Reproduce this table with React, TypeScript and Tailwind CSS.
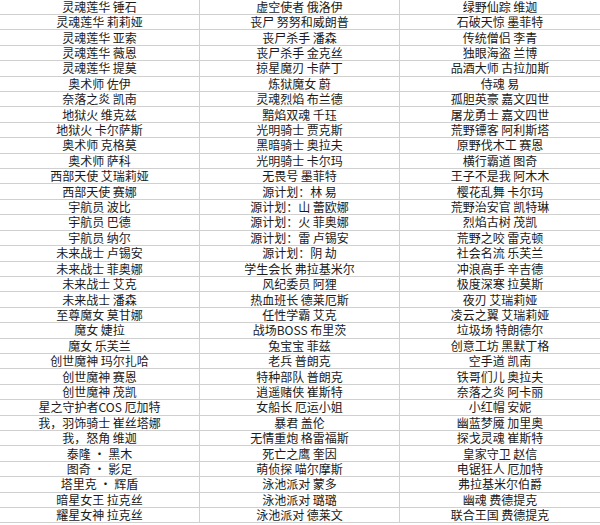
const rows: [string, string, string][] = [
  ["灵魂莲华 锤石", "虚空使者 俄洛伊", "绿野仙踪 维迦"],
  ["灵魂莲华 莉莉娅", "丧尸 努努和威朗普", "石破天惊 墨菲特"],
  ["灵魂莲华 亚索", "丧尸杀手 潘森", "传统僧侣 李青"],
  ["灵魂莲华 薇恩", "丧尸杀手 金克丝", "独眼海盗 兰博"],
  ["灵魂莲华 提莫", "掠星魔刃 卡萨丁", "品酒大师 古拉加斯"],
  ["奥术师 佐伊", "炼狱魔女 蔚", "侍魂 易"],
  ["奈落之炎 凯南", "灵魂烈焰 布兰德", "孤胆英豪 嘉文四世"],
  ["地狱火 维克兹", "黯焰双魂 千珏", "屠龙勇士 嘉文四世"],
  ["地狱火 卡尔萨斯", "光明骑士 贾克斯", "荒野镖客 阿利斯塔"],
  ["奥术师 克格莫", "黑暗骑士 奥拉夫", "原野伐木工 赛恩"],
  ["奥术师 萨科", "光明骑士 卡尔玛", "横行霸道 图奇"],
  ["西部天使 艾瑞莉娅", "无畏号 墨菲特", "王子不是我 阿木木"],
  ["西部天使 赛娜", "源计划：林 易", "樱花乱舞 卡尔玛"],
  ["宇航员 波比", "源计划：山 蕾欧娜", "荒野治安官 凯特琳"],
  ["宇航员 巴德", "源计划：火 菲奥娜", "烈焰古树 茂凯"],
  ["宇航员 纳尔", "源计划：雷 卢锡安", "荒野之咬 雷克顿"],
  ["未来战士 卢锡安", "源计划：阴 劫", "社会名流 乐芙兰"],
  ["未来战士 菲奥娜", "学生会长 弗拉基米尔", "冲浪高手 辛吉德"],
  ["未来战士 艾克", "风纪委员 阿狸", "极度深寒 拉莫斯"],
  ["未来战士 潘森", "热血班长 德莱厄斯", "夜刃 艾瑞莉娅"],
  ["至尊魔女 莫甘娜", "任性学霸 艾克", "凌云之翼 艾瑞莉娅"],
  ["魔女 婕拉", "战场BOSS 布里茨", "垃圾场 特朗德尔"],
  ["魔女 乐芙兰", "兔宝宝 菲兹", "创意工坊 黑默丁格"],
  ["创世魔神 玛尔扎哈", "老兵 普朗克", "空手道 凯南"],
  ["创世魔神 赛恩", "特种部队 普朗克", "铁哥们儿 奥拉夫"],
  ["创世魔神 茂凯", "逍遥赌侠 崔斯特", "奈落之炎 阿卡丽"],
  ["星之守护者COS 厄加特", "女船长 厄运小姐", "小红帽 安妮"],
  ["我，羽饰骑士 崔丝塔娜", "暴君 盖伦", "幽蓝梦魇 加里奥"],
  ["我，怒角 维迦", "无情重炮 格雷福斯", "探戈灵魂 崔斯特"],
  ["泰隆 · 黑木", "死亡之鹰 奎因", "皇家守卫 赵信"],
  ["图奇 · 影足", "萌侦探 喵尔摩斯", "电锯狂人 厄加特"],
  ["塔里克 · 辉盾", "泳池派对 蒙多", "弗拉基米尔伯爵"],
  ["暗星女王 拉克丝", "泳池派对 璐璐", "幽魂 费德提克"],
  ["耀星女神 拉克丝", "泳池派对 德莱文", "联合王国 费德提克"],
]

export default function App() {
  return (
    <div
      className="w-[600px] h-[525px] overflow-hidden bg-white text-[#1a1a1a] text-[12px]"
      style={{ fontFamily: '"Noto Sans CJK SC", "Liberation Sans", sans-serif' }}
    >
      {rows.map((row, i) => (
        <div
          key={i}
          className={`grid grid-cols-[200px_200px_200px] border-b border-[#d0d0d0] ${i === 0 ? "h-[15px]" : "h-[15.42px]"}`}
        >
          {row.map((cell, j) => (
            <div
              key={j}
              className={`flex items-center justify-center leading-[12px] whitespace-nowrap ${j < 2 ? "border-r border-[#d0d0d0]" : ""}`}
            >
              {cell}
            </div>
          ))}
        </div>
      ))}
    </div>
  )
}
